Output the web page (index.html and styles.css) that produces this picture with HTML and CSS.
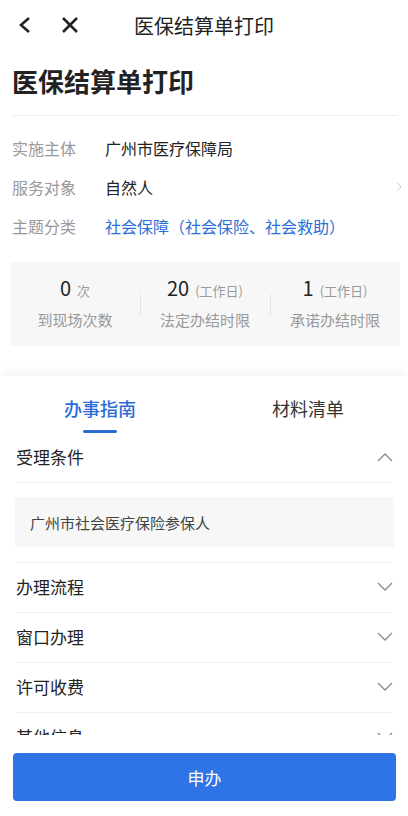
FILE: index.html
```html
<!DOCTYPE html>
<html lang="zh-CN">
<head>
    <meta charset="UTF-8">
    <meta name="viewport" content="width=device-width, initial-scale=1.0">
    <title>医保结算单打印</title>
    <link rel="stylesheet" href="styles.css">
</head>
<body>

<div class="main">
    <div class="navbar">
        <span class="nav-btn back">
            <svg width="16" height="18" viewBox="0 0 16 18"><path d="M12 2 L4 9 L12 16" fill="none" stroke="#222" stroke-width="2.6"/></svg>
        </span>
        <span class="nav-btn close">
            <svg width="18" height="18" viewBox="0 0 18 18"><path d="M2 2 L16 16 M16 2 L2 16" fill="none" stroke="#222" stroke-width="2.6"/></svg>
        </span>
        <div class="nav-title">医保结算单打印</div>
    </div>

    <div class="page">
        <h1 class="title">医保结算单打印</h1>

        <div class="info">
            <div class="info-row">
                <span class="info-label">实施主体</span>
                <span class="info-value">广州市医疗保障局</span>
            </div>
            <div class="info-row">
                <span class="info-label">服务对象</span>
                <span class="info-value">自然人</span>
                <span class="info-arrow">
                    <svg width="6" height="10" viewBox="0 0 6 10"><path d="M1 1 L5 5 L1 9" fill="none" stroke="#c8c8c8" stroke-width="1"/></svg>
                </span>
            </div>
            <div class="info-row">
                <span class="info-label">主题分类</span>
                <span class="info-value link">社会保障（社会保险、社会救助）</span>
            </div>
        </div>

        <div class="stats">
            <div class="stat">
                <div class="stat-num">0<span class="stat-unit">次</span></div>
                <div class="stat-label">到现场次数</div>
            </div>
            <div class="stat">
                <div class="stat-num">20<span class="stat-unit">(工作日)</span></div>
                <div class="stat-label">法定办结时限</div>
            </div>
            <div class="stat">
                <div class="stat-num">1<span class="stat-unit">(工作日)</span></div>
                <div class="stat-label">承诺办结时限</div>
            </div>
        </div>
    </div>

    <div class="guide">
        <div class="tabs">
            <div class="tab active">办事指南</div>
            <div class="tab">材料清单</div>
        </div>

        <div class="accordion">
            <div class="acc-item open">
                <div class="acc-head">
                    <span>受理条件</span>
                    <svg width="16" height="10" viewBox="0 0 16 10"><path d="M1 9 L8 2 L15 9" fill="none" stroke="#888" stroke-width="1.3"/></svg>
                </div>
                <div class="acc-body">
                    <div class="acc-box">广州市社会医疗保险参保人</div>
                </div>
            </div>
            <div class="acc-item">
                <div class="acc-head">
                    <span>办理流程</span>
                    <svg width="16" height="10" viewBox="0 0 16 10"><path d="M1 1 L8 8 L15 1" fill="none" stroke="#888" stroke-width="1.3"/></svg>
                </div>
            </div>
            <div class="acc-item">
                <div class="acc-head">
                    <span>窗口办理</span>
                    <svg width="16" height="10" viewBox="0 0 16 10"><path d="M1 1 L8 8 L15 1" fill="none" stroke="#888" stroke-width="1.3"/></svg>
                </div>
            </div>
            <div class="acc-item">
                <div class="acc-head">
                    <span>许可收费</span>
                    <svg width="16" height="10" viewBox="0 0 16 10"><path d="M1 1 L8 8 L15 1" fill="none" stroke="#888" stroke-width="1.3"/></svg>
                </div>
            </div>
            <div class="acc-item">
                <div class="acc-head">
                    <span>其他信息</span>
                    <svg width="16" height="10" viewBox="0 0 16 10"><path d="M1 1 L8 8 L15 1" fill="none" stroke="#888" stroke-width="1.3"/></svg>
                </div>
            </div>
        </div>
    </div>
</div>

<div class="footer">
    <button class="apply-btn">申办</button>
</div>

</body>
</html>
```

FILE: styles.css
```css
body {
    margin: 0;
    font-family: "Noto Sans CJK SC", "Noto Sans", sans-serif;
    background: #fff;
    color: #222;
}

.main {
    height: 735px;
    overflow: hidden;
}

.navbar {
    position: relative;
    height: 50px;
    display: flex;
    align-items: center;
}

.nav-btn {
    display: flex;
    align-items: center;
}

.nav-btn.back {
    margin-left: 17px;
}

.nav-btn.close {
    margin-left: 28px;
}

.nav-title {
    position: absolute;
    left: 0;
    right: 0;
    text-align: center;
    font-size: 20px;
    color: #222;
    pointer-events: none;
}

.page {
    padding: 0 10px 0 12px;
}

.title {
    margin: 0;
    padding: 13px 0 16px;
    font-size: 26px;
    line-height: 36px;
    font-weight: bold;
    color: #222;
    border-bottom: 1px solid #eee;
}

.info {
    margin-top: 12px;
}

.info-row {
    display: flex;
    align-items: center;
    height: 39px;
    font-size: 16px;
}

.info-label {
    width: 93px;
    color: #999;
}

.info-value {
    color: #222;
}

.info-value.link {
    color: #2b6fd8;
}

.info-arrow {
    margin-left: auto;
    margin-right: -4px;
    display: flex;
}

.stats {
    display: flex;
    margin: 17px -2px 0 -2px;
    padding: 14px 0 15px;
    background: #f7f7f7;
}

.stat {
    flex: 1;
    text-align: center;
    position: relative;
}

.stat + .stat::before {
    content: "";
    position: absolute;
    left: 0;
    top: 18px;
    height: 22px;
    width: 1px;
    background: #e4e4e4;
}

.stat-num {
    font-size: 20px;
    line-height: 24px;
    color: #222;
}

.stat-unit {
    font-size: 13px;
    line-height: 1;
    color: #999;
    margin-left: 6px;
}

.stat-label {
    margin-top: 9px;
    font-size: 15px;
    line-height: 22px;
    color: #999;
}

.guide {
    margin-top: 30px;
    box-shadow: 0 -6px 10px rgba(0, 0, 0, 0.035);
}

.tabs {
    display: flex;
}

.tab {
    flex: 1;
    text-align: center;
    padding-top: 20px;
    font-size: 18px;
    line-height: 24px;
    color: #333;
}

.tab:first-child {
    padding-right: 2px;
}

.tab:last-child {
    padding-left: 6px;
}

.tab::after {
    content: "";
    display: block;
    width: 34px;
    height: 3px;
    margin: 10px auto 0;
    border-radius: 2px;
}

.tab.active {
    color: #2a6dd9;
    font-weight: 500;
}

.tab.active::after {
    background: #2a6dd9;
}

.accordion {
    padding: 0 16px;
}

.acc-item {
    border-bottom: 1px solid #f0f0f0;
}

.acc-head {
    height: 49px;
    display: flex;
    align-items: center;
    justify-content: space-between;
    font-size: 17px;
    color: #222;
    padding-bottom: 2px;
    box-sizing: border-box;
}

.acc-head svg {
    margin-right: -1px;
}

.open .acc-head {
    border-bottom: 1px solid #f0f0f0;
    height: 50px;
}

.acc-body {
    padding: 14px 0 15px;
}

.acc-box {
    margin: 0 -2px 0 -1px;
    height: 50px;
    display: flex;
    align-items: center;
    padding-left: 15px;
    background: #f7f7f7;
    font-size: 15px;
    color: #444;
}

.footer {
    padding: 18px 12px 15px 13px;
}

.apply-btn {
    width: 100%;
    height: 48px;
    border: none;
    border-radius: 4px;
    background: #2f74e6;
    color: #fff;
    font-family: inherit;
    font-size: 17px;
}
```
